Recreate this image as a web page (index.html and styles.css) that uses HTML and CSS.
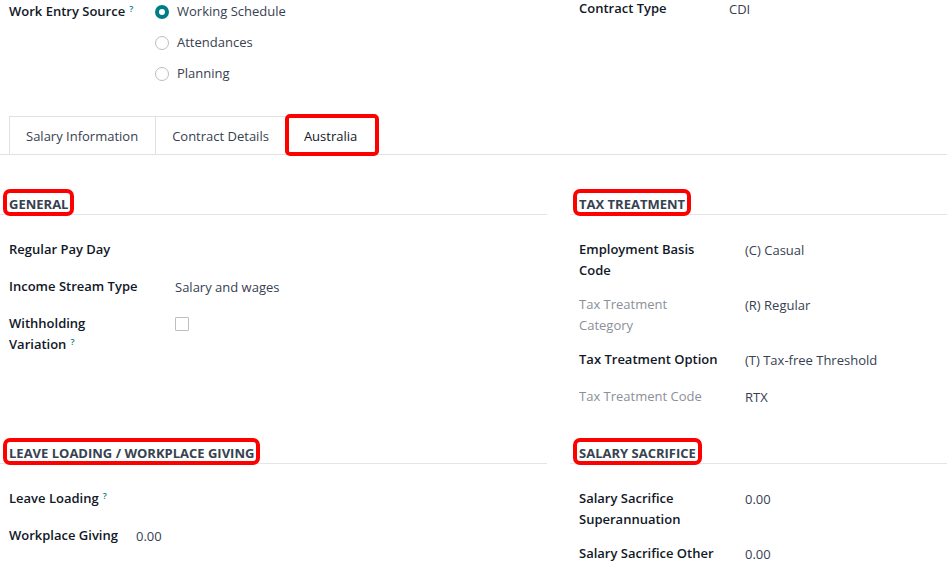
FILE: index.html
```html
<!DOCTYPE html>
<html lang="en">
<head>
<meta charset="utf-8">
<title>Contract - Australia</title>
<link rel="stylesheet" href="styles.css">
</head>
<body>
<div class="sheet">
  <div class="top">
    <div class="top-left">
      <div class="tlabel">Work Entry Source<sup class="tip">?</sup></div>
      <div class="radios">
        <div class="radio-item"><span class="radio checked"></span><span>Working Schedule</span></div>
        <div class="radio-item"><span class="radio"></span><span>Attendances</span></div>
        <div class="radio-item"><span class="radio"></span><span>Planning</span></div>
      </div>
    </div>
    <div class="top-right">
      <div class="tlabel ct">Contract Type</div>
      <div class="value ct">CDI</div>
    </div>
  </div>

  <div class="tabs">
    <div class="tab">Salary Information</div>
    <div class="tab">Contract Details</div>
    <div class="tab active">Australia</div>
  </div>

  <div class="content">
    <section class="group">
      <h3 class="heading"><span class="mark">GENERAL</span></h3>
      <div class="rows">
        <div class="row"><div class="label">Regular Pay Day</div><div class="value"></div></div>
        <div class="row"><div class="label">Income Stream Type</div><div class="value">Salary and wages</div></div>
        <div class="row"><div class="label">Withholding <span class="nowrap">Variation<sup class="tip">?</sup></span></div><div class="value"><span class="checkbox"></span></div></div>
      </div>
    </section>
    <section class="group">
      <h3 class="heading"><span class="mark">TAX TREATMENT</span></h3>
      <div class="rows">
        <div class="row"><div class="label">Employment Basis Code</div><div class="value">(C) Casual</div></div>
        <div class="row"><div class="label muted">Tax Treatment Category</div><div class="value">(R) Regular</div></div>
        <div class="row"><div class="label">Tax Treatment Option</div><div class="value">(T) Tax-free Threshold</div></div>
        <div class="row"><div class="label muted">Tax Treatment Code</div><div class="value">RTX</div></div>
      </div>
    </section>
    <section class="group">
      <h3 class="heading"><span class="mark">LEAVE LOADING / WORKPLACE GIVING</span></h3>
      <div class="rows auto">
        <div class="label">Leave Loading<sup class="tip">?</sup></div><div class="value"></div>
        <div class="label">Workplace Giving</div><div class="value">0.00</div>
      </div>
    </section>
    <section class="group">
      <h3 class="heading"><span class="mark">SALARY SACRIFICE</span></h3>
      <div class="rows">
        <div class="row"><div class="label">Salary Sacrifice Superannuation</div><div class="value">0.00</div></div>
        <div class="row"><div class="label">Salary Sacrifice Other</div><div class="value">0.00</div></div>
      </div>
    </section>
  </div>
</div>
</body>
</html>
```

FILE: styles.css
```css
* { box-sizing: border-box; }
html, body { margin: 0; padding: 0; background: #ffffff; }
body {
  font-family: "Open Sans", "Noto Sans", "Liberation Sans", sans-serif;
  font-size: 13px;
  line-height: 21px;
  color: #374151;
  overflow: hidden;
}
.sheet { width: 947px; }

.top {
  display: grid;
  grid-template-columns: 570px 1fr;
  height: 83px;
}
.top-left { display: flex; padding: 1px 0 0 9px; }
.top-left .tlabel { width: 146px; }
.top-right { display: flex; padding-left: 9px; }
.top-right .tlabel { width: 150px; }
.ct { line-height: 16px; }
.tlabel { font-weight: 600; color: #111827; }
.nowrap { white-space: nowrap; }

.tip {
  display: inline-block;
  color: #017e84;
  font-size: 9px;
  font-weight: 600;
  line-height: 9px;
  vertical-align: top;
  margin-top: 3px;
  margin-left: 4px;
}

.radios { display: flex; flex-direction: column; gap: 10px; }
.radio-item { display: flex; align-items: center; gap: 8px; }
.radio {
  width: 14px; height: 14px; border-radius: 50%;
  border: 1px solid #b9bec5;
  background: #fff;
}
.radio.checked { border: 4px solid #017e84; }

.tabs {
  margin-top: 33px;
  display: flex;
  padding-left: 9px;
  border-bottom: 1px solid #dee2e6;
}
.tab {
  padding: 9px 17px 7px 16px;
  border: 1px solid #dee2e6;
  border-bottom: none;
  color: #374151;
  height: 38px;
}
.tab + .tab { border-left: none; }
.tab.active {
  padding-left: 17px; padding-right: 19px;
  color: #111827;
  outline: 4px solid #ff0000;
  outline-offset: -2px;
  border-radius: 3px;
  position: relative;
}

.content {
  display: grid;
  grid-template-columns: 547px 1fr;
  column-gap: 23px;
  align-items: start;
  padding-top: 19px;
}

.heading {
  margin: 19px 0 24px;
  padding: 0 0 2px 7px;
  border-bottom: 1px solid #e3e5e8;
  font-size: 13px;
  font-weight: 700;
  color: #374151;
  line-height: 16px;
}
.mark {
  display: inline-block;
  padding: 3px 2px 0;
  outline: 4px solid #ff0000;
  border-radius: 3px;
}

.rows { padding-left: 9px; }
.row {
  display: grid;
  grid-template-columns: 166px 1fr;
  margin-bottom: 13px;
}
.label { font-weight: 600; color: #111827; padding-right: 24px; }
.label.muted { color: #8b9099; font-weight: 400; }
.value { min-height: 24px; padding-top: 1px; color: #374151; }

.rows.auto {
  display: grid;
  grid-template-columns: max-content 1fr;
  column-gap: 18px;
  row-gap: 13px;
}
.rows.auto .label { padding-right: 0; }

.checkbox {
  display: block;
  width: 14px; height: 14px;
  margin-top: 3px;
  border: 1px solid #bcbfc4;
  border-radius: 1px;
}
```
